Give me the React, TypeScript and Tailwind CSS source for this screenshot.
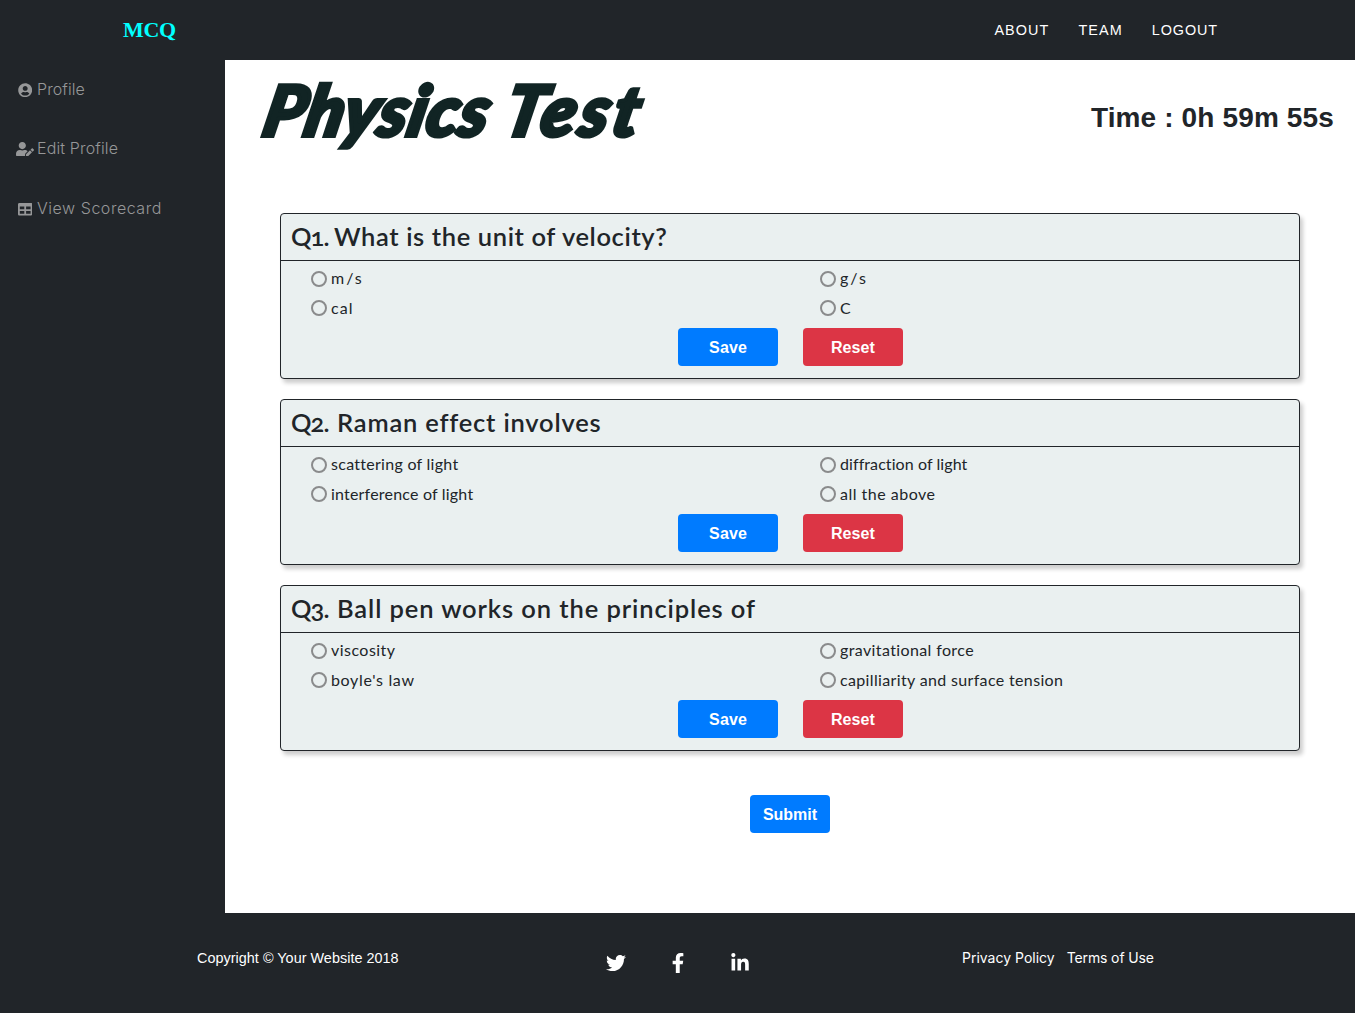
import React from "react";
import {
  FaFacebookF,
  FaLinkedinIn,
  FaTable,
  FaTwitter,
  FaUserCircle,
  FaUserEdit,
} from "react-icons/fa";

type Option = { text: string; tracking: string };
type Question = {
  number: string;
  numberWidth: string;
  title: string;
  tracking: string;
  options: Option[];
};

const questions: Question[] = [
  {
    number: "Q1.",
    numberWidth: "w-[43px]",
    title: "What is the unit of velocity?",
    tracking: "tracking-[0.62px]",
    options: [
      { text: "m/s", tracking: "tracking-[2px]" },
      { text: "g/s", tracking: "tracking-[2px]" },
      { text: "cal", tracking: "tracking-[1.1px]" },
      { text: "C", tracking: "tracking-normal" },
    ],
  },
  {
    number: "Q2.",
    numberWidth: "w-[46px]",
    title: "Raman effect involves",
    tracking: "tracking-[0.8px]",
    options: [
      { text: "scattering of light", tracking: "tracking-[0.28px]" },
      { text: "diffraction of light", tracking: "tracking-[0.08px]" },
      { text: "interference of light", tracking: "tracking-[0.2px]" },
      { text: "all the above", tracking: "tracking-[0.5px]" },
    ],
  },
  {
    number: "Q3.",
    numberWidth: "w-[46px]",
    title: "Ball pen works on the principles of",
    tracking: "tracking-[0.9px]",
    options: [
      { text: "viscosity", tracking: "tracking-[0.46px]" },
      { text: "gravitational force", tracking: "tracking-[0.38px]" },
      { text: "boyle's law", tracking: "tracking-[0.66px]" },
      { text: "capilliarity and surface tension", tracking: "tracking-[0.35px]" },
    ],
  },
];

const menu = [
  { label: "Profile", Icon: FaUserCircle, size: "size-[14.4px]", tracking: "tracking-[0.1px]" },
  { label: "Edit Profile", Icon: FaUserEdit, size: "h-[14.4px] w-[18px]", tracking: "tracking-[0.14px]" },
  { label: "View Scorecard", Icon: FaTable, size: "size-[14.4px]", tracking: "tracking-[0.54px]" },
];

function Header() {
  return (
    <header className="flex h-[60px] items-center justify-between bg-[#212529] pl-[123px] pr-[137px]">
      <a className="font-['Liberation_Serif'] text-[22px] font-bold leading-none tracking-[-0.3px] text-[#00ffff]">
        MCQ
      </a>
      <nav className="flex gap-[29px] text-[14.4px] leading-5 tracking-[0.9px] text-white">
        <a className="tracking-[1.1px]">ABOUT</a>
        <a className="tracking-[1.1px]">TEAM</a>
        <a>LOGOUT</a>
      </nav>
    </header>
  );
}

function Sidebar() {
  return (
    <aside className="w-[225px] shrink-0 bg-[#212529] font-['Inter'] text-base font-light text-[#969798]">
      {menu.map(({ label, Icon, size, tracking }) => (
        <a key={label} className="flex h-[59.5px] items-center pl-[15px]">
          <span className="flex w-5 justify-center">
            <Icon className={`${size} shrink-0`} />
          </span>
          <span className={`mb-[2px] ml-[2px] ${tracking}`}>{label}</span>
        </a>
      ))}
    </aside>
  );
}

function QuestionCard({ question, name }: { question: Question; name: string }) {
  return (
    <section className="h-[166px] rounded-[4px] border border-[#212529] bg-[#eaf0f0] shadow-[3px_4px_4px_rgba(0,0,0,0.2)]">
      <h2 className="flex h-[47px] border-b border-[#212529] pl-[10px] font-['Lato'] text-[25.5px] font-semibold leading-[44px] oldstyle-nums">
        <span className={`tracking-[-0.9px] ${question.numberWidth}`}>{question.number}</span>
        <span className={question.tracking}>{question.title}</span>
      </h2>
      <div className="grid grid-cols-[509px_1fr] pl-[30px] pt-[3px] font-['Lato']">
        {question.options.map((option) => (
          <label key={option.text} className="flex h-[29.5px] items-center gap-1 text-base font-normal">
            <input
              type="radio"
              name={name}
              className="size-4 shrink-0 appearance-none rounded-full border-2 border-[#8a8b8c]"
            />
            <span className={`mb-px ${option.tracking}`}>{option.text}</span>
          </label>
        ))}
      </div>
      <div className="mt-[5px] flex justify-center gap-[25px] text-base font-bold text-white">
        <button className="h-[38px] w-[100px] rounded-[4px] bg-[#007bff] pl-px pt-[2px] tracking-[0.1px]">Save</button>
        <button className="h-[38px] w-[100px] rounded-[4px] bg-[#dc3545] pl-px pt-[2px] tracking-[0.1px]">Reset</button>
      </div>
    </section>
  );
}

export default function App() {
  return (
    <div className="flex h-[1013px] w-full flex-col bg-white font-['Liberation_Sans',sans-serif] text-[#212529]">
      <Header />
      <div className="flex h-[853px]">
        <Sidebar />
        <main className="flex-1">
          <div className="flex h-[153px] items-start justify-between pl-[32px] pr-[21px]">
            <h1 className="inline-block origin-bottom-left -skew-x-12 pt-[7px] font-['Lato'] text-[70px] font-black italic leading-[84px] tracking-[1px] text-[#112424] [-webkit-text-stroke:4px_#112424]">
              Physics <span className="tracking-[4.4px]">Test</span>
            </h1>
            <p className="pt-[37px] text-[28px] font-bold leading-[42px] tracking-[0.14px]">
              Time : 0h 59m 55s
            </p>
          </div>
          <div className="flex flex-col gap-5 px-[55px]">
            {questions.map((question, index) => (
              <QuestionCard key={question.number} question={question} name={`question-${index}`} />
            ))}
          </div>
          <div className="mt-11 flex justify-center">
            <button className="h-[38px] w-20 rounded-[4px] bg-[#007bff] pt-[2px] text-base font-bold text-white">
              Submit
            </button>
          </div>
        </main>
      </div>
      <footer className="flex h-[100px] items-start bg-[#212529] pl-[197px] pt-[35px] text-white">
        <p className="w-[409px] text-[14.4px] leading-5 tracking-[0.03px]">Copyright © Your Website 2018</p>
        <div className="mt-[5px] flex w-[356px] gap-[42px] text-xl">
          <FaTwitter />
          <FaFacebookF />
          <FaLinkedinIn />
        </div>
        <div className="flex gap-3 font-['Inter'] text-sm leading-5">
          <a>Privacy Policy</a>
          <a className="tracking-[-0.12px]">Terms of Use</a>
        </div>
      </footer>
    </div>
  );
}
